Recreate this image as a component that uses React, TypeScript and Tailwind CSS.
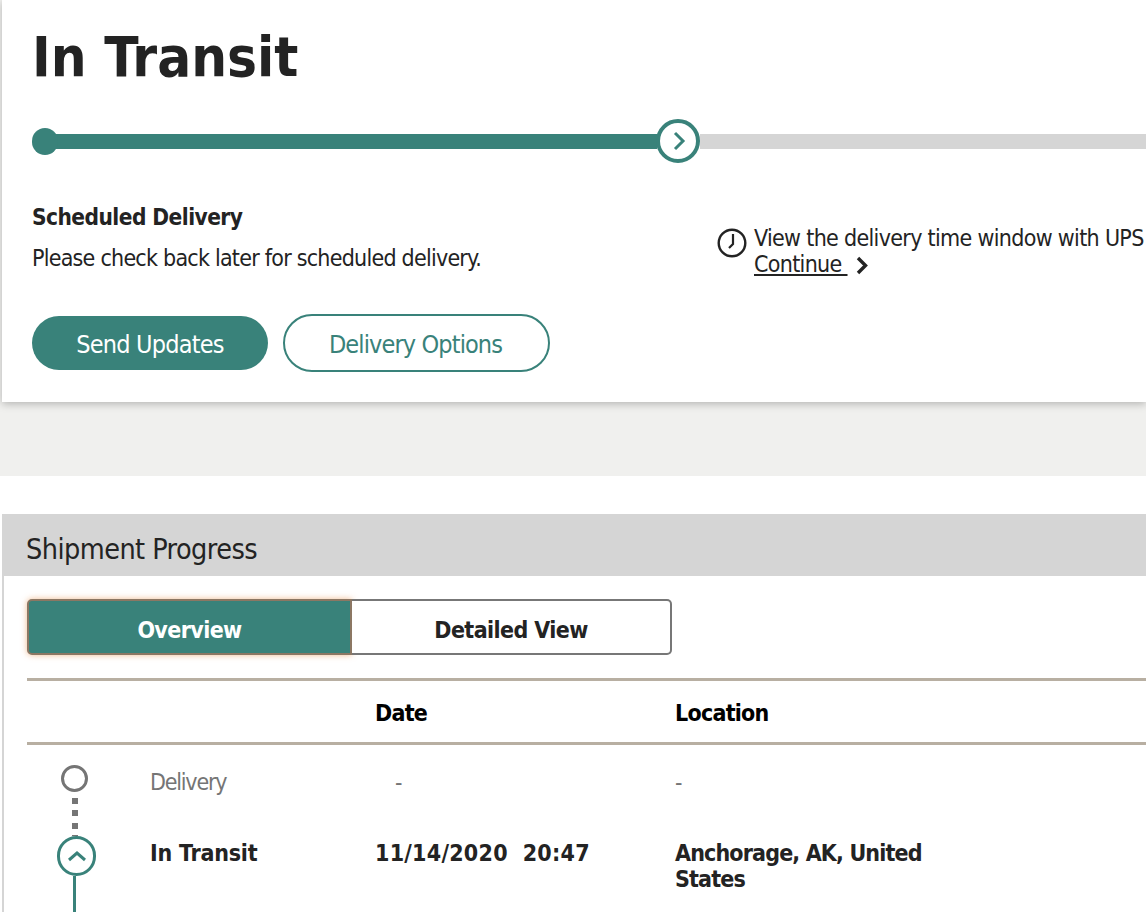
const font = "font-['DejaVu_Sans_Condensed','DejaVu_Sans',sans-serif]";

function App() {
  return (
    <div className={`h-[912px] w-[1146px] overflow-hidden bg-white text-[#232323] ${font}`}>
      {/* Status card */}
      <div className="bg-[#f0f0ee] pb-[74px]">
        <div className="ml-[2px] h-[402px] bg-white pl-[30px] pt-[20px] shadow-[0_2px_8px_rgba(0,0,0,0.25)]">
          <h1 className="h-[78px] text-[56px] font-bold leading-[74px]">In Transit</h1>

          {/* Progress bar */}
          <div className="mt-[21px] flex h-[44px] items-center">
            <div className="z-10 -mr-[13px] h-[27px] w-[26px] rounded-full bg-[#39827a]" />
            <div className="h-[15px] w-[612px] bg-[#39827a]" />
            <div className="z-10 -ml-[1px] flex h-[44px] w-[44px] shrink-0 items-center justify-center rounded-full border-[4px] border-[#39827a] bg-white">
              <svg viewBox="0 0 14 20" className="ml-[1px] h-[20px] w-[14px] fill-none stroke-[#39827a] stroke-[3]">
                <path d="M3 2l8 8-8 8" />
              </svg>
            </div>
            <div className="h-[15px] flex-1 bg-[#d5d5d5]" />
          </div>

          {/* Delivery details */}
          <div className="mt-[40px] flex">
            <div className="w-[685px]">
              <div className="text-[22.5px] font-bold leading-[28px] tracking-[-0.55px]">Scheduled Delivery</div>
              <div className="mt-[12px] text-[23px] leading-[30px] tracking-[-0.76px]">Please check back later for scheduled delivery.</div>
            </div>
            <div className="mt-[22px] flex">
              <svg viewBox="0 0 30 30" className="mt-[3px] h-[30px] w-[30px] shrink-0 fill-none stroke-[#232323]">
                <circle cx="15" cy="15" r="13.3" strokeWidth="2.4" />
                <path d="M16 6v10l-4 4" strokeWidth="2.2" />
              </svg>
              <div className="ml-[7px] whitespace-nowrap text-[23px] leading-[26px] tracking-[-0.68px]">
                <div>View the delivery time window with UPS</div>
                <div className="flex items-center">
                  <span className="underline">Continue&nbsp;</span>
                  <svg viewBox="0 0 12 19" className="ml-[8px] mt-[3px] h-[19px] w-[12px] fill-none stroke-[#232323] stroke-[3.4]">
                    <path d="M2 2l7.5 7.5L2 17" />
                  </svg>
                </div>
              </div>
            </div>
          </div>

          {/* Actions */}
          <div className="mt-[37px] flex items-center gap-[15px]">
            <button className="h-[54px] w-[236px] rounded-[27px] bg-[#39827a] pt-[4px] text-[25px] tracking-[-0.8px] text-white">Send Updates</button>
            <button className="h-[58px] w-[267px] rounded-[29px] border-2 border-[#39827a] bg-white pr-[2px] pt-[4px] text-[25px] tracking-[-0.88px] text-[#39827a]">Delivery Options</button>
          </div>
        </div>
      </div>

      {/* Shipment progress */}
      <div className="ml-[2px] mt-[38px] border-l-2 border-[#d5d5d5]">
        <div className="-ml-[2px] flex h-[62px] items-center bg-[#d5d5d5] pl-[24px] pt-[11px] text-[28.5px] tracking-[-0.55px]">Shipment Progress</div>
        <div className="pl-[23px] pt-[23px]">
          <div className="flex h-[56px] w-[645px] text-[23px] font-bold tracking-[-0.6px]">
            <div className="flex w-[325px] items-center justify-center rounded-l-[5px] border-2 border-[#8c7763] bg-[#39827a] pt-[6px] text-white shadow-[0_0_6px_rgba(230,140,70,0.6)]">Overview</div>
            <div className="flex flex-1 items-center justify-center rounded-r-[5px] border-y-2 border-r-2 border-[#777777] bg-white pt-[6px]">Detailed View</div>
          </div>

          {/* Table */}
          <div className="mt-[23px] grid h-[67px] grid-cols-[348px_300px_1fr] items-center border-y-[3px] border-[#b8afa2] pt-[3px] text-[23px] font-bold tracking-[-0.75px] text-black">
            <span />
            <span>Date</span>
            <span>Location</span>
          </div>
          <div className="grid h-[91px] grid-cols-[123px_225px_300px_1fr] items-start text-[23px] leading-[27px] tracking-[-1.2px] text-[#757575]">
            <div className="pl-[34px] pt-[20px]">
              <div className="h-[27px] w-[27px] rounded-full border-[3px] border-[#757575]" />
              <div className="ml-[11px] mt-[6px] h-[38px] w-[6px] bg-[repeating-linear-gradient(#757575_0,#757575_6px,transparent_6px,transparent_12.5px)]" />
            </div>
            <span className="mt-[24px]">Delivery</span>
            <span className="mt-[24px] pl-[20px]">-</span>
            <span className="mt-[24px]">-</span>
          </div>
          <div className="grid grid-cols-[123px_225px_300px_1fr] items-start text-[23px] font-bold leading-[26px] text-[#232323]">
            <div className="pl-[30px]">
              <div className="flex h-[40px] w-[39px] items-center justify-center rounded-full border-[3px] border-[#39827a] bg-white">
                <svg viewBox="0 0 20 12" className="h-[12px] w-[20px] fill-none stroke-[#39827a] stroke-[3]">
                  <path d="M2 10l8-7 8 7" />
                </svg>
              </div>
              <div className="ml-[16px] h-[60px] w-[3px] bg-[#39827a]" />
            </div>
            <span className="mt-[4px] tracking-[-0.2px]">In Transit</span>
            <span className="mt-[4px] whitespace-pre tracking-[0.25px]">11/14/2020  20:47</span>
            <span className="mt-[4px] w-[270px] tracking-[-0.85px]">Anchorage, AK, United States</span>
          </div>
        </div>
      </div>
    </div>
  );
}

export default App;
